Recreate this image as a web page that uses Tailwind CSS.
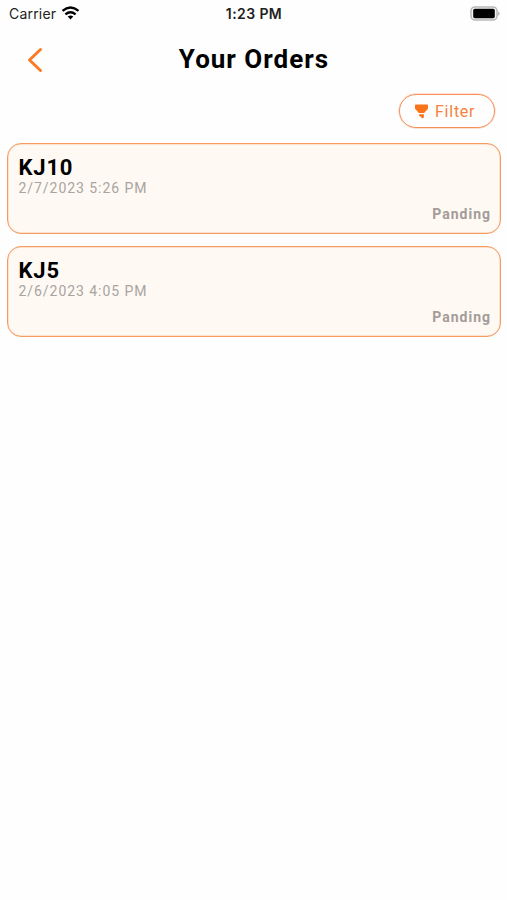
<!DOCTYPE html>
<html lang="en">
<head>
<meta charset="utf-8">
<meta name="viewport" content="width=device-width, initial-scale=1">
<title>Your Orders</title>
<script src="https://cdn.jsdelivr.net/npm/@tailwindcss/browser@4"></script>
</head>
<body class="min-h-screen bg-[#fefefe] font-['Roboto',sans-serif] text-black">
<header class="grid h-7 grid-cols-3 items-center pr-[6px] pl-[9px] font-['Inter',sans-serif] text-[14px] leading-7">
  <div class="flex items-center gap-[5px] text-[#222]">
    <span class="tracking-[0.2px]">Carrier</span>
    <svg class="mb-[2px] h-[14px] w-[19px]" viewBox="0 0 18 14" fill="none" stroke="#000" stroke-width="2.4">
      <path d="M1 4.9Q9-1.9 17 4.9"/>
      <path d="M3.9 8.3Q9 4 14.1 8.3"/>
      <path d="M6.2 10.5Q9 8.3 11.8 10.5L9 13.4Z" fill="#000" stroke="none"/>
    </svg>
  </div>
  <span class="mr-[2px] text-center font-semibold tracking-[0.4px] text-[#222]">1:23 PM</span>
  <svg class="mb-[2px] h-[15px] w-[31px] justify-self-end" viewBox="0 0 31 15">
    <rect x="1" y=".9" width="26" height="13.2" rx="4" fill="#f3f3f3" stroke="#b9b9b9" stroke-width="1.5"/>
    <rect x="3.2" y="2.8" width="21.6" height="9.4" rx="1.6" fill="#000"/>
    <path d="M28.2 5.2Q31 7.5 28.2 9.8Z" fill="#aaa"/>
  </svg>
</header>
<div class="grid h-[62px] grid-cols-[1fr_auto_1fr] items-center pl-[27px]">
  <svg class="mt-[2px] h-[26px] w-4" viewBox="0 0 16 26" fill="none" stroke="#f97c24" stroke-width="3" stroke-linecap="round" stroke-linejoin="round"><path d="M13.5 2.5 2.5 13l11 10.5"/></svg>
  <h1 class="mr-[26px] text-[26px] leading-8 font-bold tracking-[1px]">Your Orders</h1>
</div>
<div class="flex justify-end pt-[4px] pr-[12px]">
  <button class="flex h-[34px] w-[96px] items-center gap-[7px] rounded-full border border-[#f7905a] pl-[15px] text-[16px] tracking-[0.75px] text-[#f58240] shadow-[0_0_0_0.5px_#f7905a80]">
    <svg class="mt-[1px] h-[15px] w-[13px] shrink-0" viewBox="0 0 13 15" fill="#fa7419"><path d="M.7.5h11.6q.7 0 .7.8V4q0 1-.7 1.6L9.6 8.5q-.4.5-1.1.5h-4q-.7 0-1.1-.5L.7 5.6Q0 5 0 4V1.3Q0 .5.7.5ZM4.2 10.2h4.7v2.6q0 1-.8 1.4H7.2q-.8-.2-.9-1.3l-1.2-.4q-.9-.2-.9-1Z"/></svg>
    <span class="mt-[2px]">Filter</span>
  </button>
</div>
<main class="flex flex-col gap-3 pt-[15px] pr-[6px] pl-[7px]">
  <article class="flex h-[91px] flex-col rounded-[14px] border border-[#f59b61] bg-[#fff9f4] pt-[11px] pr-[9px] pl-[10.5px] shadow-[inset_0_0_0_0.5px_#f59b6180]">
    <h2 class="text-[22px] leading-[25px] font-bold tracking-[0.8px]">KJ10</h2>
    <time class="text-[14px] leading-[17px] tracking-[0.95px] text-[#a8a4a1]">2/7/2023 5:26 PM</time>
    <span class="mt-[9px] self-end text-[14px] leading-[17px] font-bold tracking-[1px] text-[#a39c98]">Panding</span>
  </article>
  <article class="flex h-[91px] flex-col rounded-[14px] border border-[#f59b61] bg-[#fff9f4] pt-[11px] pr-[9px] pl-[10.5px] shadow-[inset_0_0_0_0.5px_#f59b6180]">
    <h2 class="text-[22px] leading-[25px] font-bold tracking-[0.8px]">KJ5</h2>
    <time class="text-[14px] leading-[17px] tracking-[0.95px] text-[#a8a4a1]">2/6/2023 4:05 PM</time>
    <span class="mt-[9px] self-end text-[14px] leading-[17px] font-bold tracking-[1px] text-[#a39c98]">Panding</span>
  </article>
</main>
</body>
</html>
